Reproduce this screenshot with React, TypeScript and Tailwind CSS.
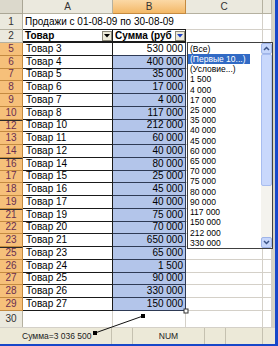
import React from 'react';

const data: [number, string, string][] = [
  [5, 'Товар 3', '530 000'],
  [6, 'Товар 4', '400 000'],
  [7, 'Товар 5', '35 000'],
  [8, 'Товар 6', '17 000'],
  [9, 'Товар 7', '4 000'],
  [10, 'Товар 8', '117 000'],
  [12, 'Товар 10', '212 000'],
  [13, 'Товар 11', '60 000'],
  [14, 'Товар 12', '40 000'],
  [16, 'Товар 14', '80 000'],
  [17, 'Товар 15', '25 000'],
  [18, 'Товар 16', '45 000'],
  [19, 'Товар 17', '40 000'],
  [21, 'Товар 19', '75 000'],
  [22, 'Товар 20', '70 000'],
  [23, 'Товар 21', '650 000'],
  [25, 'Товар 23', '65 000'],
  [26, 'Товар 24', '1 500'],
  [27, 'Товар 25', '90 000'],
  [28, 'Товар 26', '330 000'],
  [29, 'Товар 27', '150 000'],
];

const gaps = new Set([12, 16, 21, 25]);

const listItems = [
  '(Все)', '(Первые 10...)', '(Условие...)', '1 500', '4 000', '17 000', '25 000', '35 000', '40 000', '45 000',
  '60 000', '65 000', '70 000', '75 000', '80 000', '90 000', '117 000', '150 000', '212 000', '330 000',
];

function FilterButton({ active }: { active?: boolean }) {
  return (
    <div className="w-[10px] h-[10px] shrink-0 bg-[#ece9d8] border border-[#8a8778] flex items-center justify-center">
      <svg width="6" height="4" viewBox="0 0 6 4">
        <polygon points="0,0 6,0 3,3.5" fill={active ? '#1c3fc4' : '#000'} />
      </svg>
    </div>
  );
}

function ScrollBtn({ up }: { up?: boolean }) {
  return (
    <div className="h-[11px] shrink-0 bg-[#c6d6fb] border border-[#9fb4e8] rounded-[2px] flex items-center justify-center">
      <svg width="7" height="5" viewBox="0 0 7 5">
        <polyline points={up ? '1,4 3.5,1.5 6,4' : '1,1 3.5,3.5 6,1'} fill="none" stroke="#3d5588" strokeWidth="1.5" />
      </svg>
    </div>
  );
}

export default function App() {
  return (
    <div
      className="relative w-[278px] h-[346px] overflow-hidden bg-white flex flex-col border-r-[3px] border-b-[2px] border-[#1747c9] text-black"
      style={{ fontFamily: '"Liberation Sans", Arial, sans-serif' }}
    >
      {/* column headers */}
      <div className="flex h-[14px] shrink-0 text-[10px] leading-none text-[#333]">
        <div className="w-[23px] bg-[#dcd9cc] border-r border-b border-[#aaa695]" />
        <div className="w-[90px] bg-[#ebe9de] border-r border-b border-[#b5b1a0] flex items-center justify-center">A</div>
        <div className="w-[73px] bg-gradient-to-b from-[#fbd9a6] to-[#f3b866] border-r border-b border-[#c48a40] flex items-center justify-center">B</div>
        <div className="w-[77px] bg-[#ebe9de] border-r border-b border-[#b5b1a0] flex items-center justify-center">C</div>
        <div className="w-[9px] bg-[#ebe9de] border-r border-b border-[#b5b1a0]" />
        <div className="w-[3px] bg-[#d6d3c6]" />
      </div>

      {/* row 1 */}
      <div className="flex h-[16px] shrink-0 text-[10px] leading-none">
        <div className="w-[23px] bg-[#ebe9de] border-r border-b border-[#b5b1a0] flex items-center justify-center text-[#333]">1</div>
        <div className="w-[163px] border-b border-[#1a1a1a] flex items-center pl-[2px] whitespace-nowrap">Продажи с 01-08-09 по 30-08-09</div>
        <div className="w-[77px] border-r border-b border-[#d4d0c8]" />
        <div className="w-[9px] border-r border-b border-[#d4d0c8]" />
        <div className="w-[3px] bg-[#d6d3c6]" />
      </div>

      {/* row 2 */}
      <div className="flex h-[13px] shrink-0 text-[10px] leading-none font-bold">
        <div className="w-[23px] bg-[#ebe9de] border-r border-b border-[#b5b1a0] font-normal flex items-center justify-center text-[#333]">2</div>
        <div className="w-[90px] border-r border-b-2 border-[#1a1a1a] flex items-center pl-[2px]">
          <span className="flex-1">Товар</span>
          <FilterButton />
        </div>
        <div className="w-[73px] border-r border-b-2 border-[#1a1a1a] flex items-center pl-[2px]">
          <span className="flex-1 whitespace-nowrap">Сумма (руб</span>
          <FilterButton active />
        </div>
        <div className="w-[77px] border-r border-b border-[#d4d0c8]" />
        <div className="w-[9px] border-r border-b border-[#d4d0c8]" />
        <div className="w-[3px] bg-[#d6d3c6]" />
      </div>

      {data.map(([n, name, sum]) => (
        <div key={n} className="flex h-[12.76px] shrink-0 text-[10px] leading-none">
          <div
            className={`w-[23px] bg-[#f6c07a] border-r border-b border-[#c48a40] flex items-center justify-center text-[#6a2f50] ${gaps.has(n) ? 'border-t border-t-[#2a2a2a]' : ''}`}
          >
            {n}
          </div>
          <div className="w-[90px] border-r border-b border-[#1a1a1a] flex items-center pl-[3px]">{name}</div>
          <div
            className={`w-[73px] border-r border-b border-[#2e3a55] flex items-center justify-end pr-[2px] ${n === 5 ? 'bg-white' : 'bg-[#b3c5ea]'}`}
          >
            {sum}
          </div>
          <div className="w-[77px] border-r border-b border-[#d4d0c8]" />
          <div className="w-[9px] border-r border-b border-[#d4d0c8]" />
          <div className="w-[3px] bg-[#d6d3c6]" />
        </div>
      ))}

      {/* row 30 */}
      <div className="flex flex-1 text-[10px] leading-none">
        <div className="w-[23px] bg-[#ebe9de] border-r border-[#b5b1a0] flex items-center justify-center text-[#333]">30</div>
        <div className="w-[90px] border-r border-[#d4d0c8]" />
        <div className="w-[73px] border-r border-[#d4d0c8]" />
        <div className="w-[77px] border-r border-[#d4d0c8]" />
        <div className="w-[9px] border-r border-[#d4d0c8]" />
        <div className="w-[3px] bg-[#d6d3c6]" />
      </div>

      {/* status bar */}
      <div className="flex h-[17px] shrink-0 bg-[#ece9d8] border-t border-[#d4d0c8] text-[8.5px] leading-none text-[#222]">
        <div className="w-[112px] border-r border-[#c5c1b0] flex items-center pl-[22px] whitespace-nowrap">Сумма=3 036 500</div>
        <div className="w-[21px] border-r border-[#c5c1b0]" />
        <div className="w-[72px] border-r border-[#c5c1b0] flex items-center justify-center">NUM</div>
        <div className="w-[21px] border-r border-[#c5c1b0]" />
        <div className="w-[37px] border-r border-[#c5c1b0]" />
        <div className="flex-1" />
      </div>

      {/* autofilter dropdown */}
      <div className="absolute left-[187px] top-[42px] w-[86px] h-[207px] bg-white border border-[#404040] flex text-[8.5px] leading-none">
        <div className="flex-1 flex flex-col pt-[1px]">
          {listItems.map((t, i) => (
            <div key={t} className="h-[10.25px] flex items-center">
              <span
                className={`h-full flex items-center pl-[2px] ${i === 1 ? 'w-[62px] bg-[#316ac5] text-white' : ''}`}
              >
                {t}
              </span>
            </div>
          ))}
        </div>
        <div className="w-[11px] flex flex-col bg-[#f4f3ee]">
          <ScrollBtn up />
          <div className="h-[132px] bg-[#c9d8fc] border border-[#a8bdf0] rounded-[2px]" />
          <div className="flex-1" />
          <ScrollBtn />
        </div>
      </div>

      {/* annotation line and fill handle */}
      <svg className="absolute left-0 top-0 pointer-events-none" width="278" height="346">
        <line x1="95" y1="333" x2="143" y2="316" stroke="#111" strokeWidth="1" />
        <rect x="93" y="331" width="4" height="4" fill="#000" />
        <rect x="141" y="314" width="4" height="4" fill="#000" />
        <rect x="184" y="309" width="4" height="4" fill="#fff" stroke="#333" strokeWidth="1" />
      </svg>
    </div>
  );
}
